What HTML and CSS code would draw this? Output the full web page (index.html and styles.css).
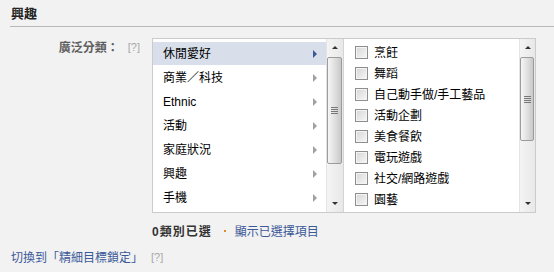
FILE: index.html
```html
<!DOCTYPE html>
<html lang="zh-Hant">
<head>
    <meta charset="UTF-8">
    <title>興趣</title>
    <link rel="stylesheet" href="styles.css">
</head>
<body>
    <h2 class="section-title">興趣</h2>

    <div class="field">
        <div class="field-label">廣泛分類：<span class="help">[?]</span></div>

        <div class="picker">
            <div class="pane pane-left">
                <ul class="cat-list">
                    <li class="cat selected">休閒愛好<i class="arrow"></i></li>
                    <li class="cat">商業／科技<i class="arrow"></i></li>
                    <li class="cat">Ethnic<i class="arrow"></i></li>
                    <li class="cat">活動<i class="arrow"></i></li>
                    <li class="cat">家庭狀況<i class="arrow"></i></li>
                    <li class="cat">興趣<i class="arrow"></i></li>
                    <li class="cat">手機<i class="arrow"></i></li>
                </ul>
                <div class="scrollbar">
                    <div class="sb-btn"><i class="sb-up"></i></div>
                    <div class="sb-thumb thumb-left"><i class="grip"></i></div>
                    <div class="sb-space"></div>
                    <div class="sb-btn"><i class="sb-down"></i></div>
                </div>
            </div>

            <div class="pane pane-right">
                <ul class="opt-list">
                    <li class="opt"><span class="box"></span>烹飪</li>
                    <li class="opt"><span class="box"></span>舞蹈</li>
                    <li class="opt"><span class="box"></span>自己動手做/手工藝品</li>
                    <li class="opt"><span class="box"></span>活動企劃</li>
                    <li class="opt"><span class="box"></span>美食餐飲</li>
                    <li class="opt"><span class="box"></span>電玩遊戲</li>
                    <li class="opt"><span class="box"></span>社交/網路遊戲</li>
                    <li class="opt"><span class="box"></span>園藝</li>
                </ul>
                <div class="scrollbar scrollbar-right">
                    <div class="sb-btn"><i class="sb-up"></i></div>
                    <div class="sb-thumb thumb-right"><i class="grip"></i></div>
                    <div class="sb-space"></div>
                    <div class="sb-btn"><i class="sb-down"></i></div>
                </div>
            </div>
        </div>
    </div>

    <div class="summary">
        <span class="count">0類別已選</span><span class="dot"></span><a href="#" class="link">顯示已選擇項目</a>
    </div>

    <div class="switch">
        <a href="#" class="link">切換到「精細目標鎖定」</a><span class="help">[?]</span>
    </div>
</body>
</html>
```

FILE: styles.css
```css
body {
    margin: 0;
    background: #f2f2f2;
    color: #000;
    font-family: "Liberation Sans", "Noto Sans CJK TC", sans-serif;
    font-size: 12px;
    line-height: 14px;
}

ul {
    list-style: none;
    margin: 0;
    padding: 0;
}

.section-title {
    margin: 0 0 0 10px;
    padding: 7px 0 5px 1px;
    font-size: 13px;
    line-height: 14px;
    font-weight: bold;
    color: #222;
    border-bottom: 1px solid #b8b8b8;
}

.field {
    display: flex;
    margin-top: 11px;
}

.field-label {
    width: 140px;
    margin-right: 12px;
    padding-top: 2px;
    text-align: right;
    font-weight: bold;
    color: #5e5e5e;
}

.help {
    margin-left: 9px;
    font-size: 11px;
    font-weight: normal;
    color: #a8a8a8;
    vertical-align: 1px;
}

.picker {
    display: flex;
    width: 382px;
    height: 173px;
    background: #fff;
    border: 1px solid #cbcbcb;
}

.pane {
    display: flex;
}

.pane-left {
    width: 190px;
    border-right: 1px solid #d4d4d4;
}

.pane-right {
    width: 191px;
}

.cat-list {
    flex: 1;
    padding-top: 3px;
}

.cat {
    display: flex;
    align-items: center;
    justify-content: space-between;
    height: 23px;
    margin-bottom: 1px;
    padding: 0 9px 0 10px;
    font-size: 12px;
}

.cat.selected {
    background: #d8dfea;
}

.arrow {
    width: 0;
    height: 0;
    border-left: 4px solid #a0a0a0;
    border-top: 4px solid transparent;
    border-bottom: 4px solid transparent;
}

.cat.selected .arrow {
    border-left-color: #3b5998;
}

.opt-list {
    flex: 1;
    padding: 3px 0 0 11px;
}

.opt {
    display: flex;
    align-items: center;
    height: 21px;
}

.box {
    width: 11px;
    height: 11px;
    margin-right: 6px;
    border: 1px solid #8e8e8e;
    background: linear-gradient(135deg, #d6d6d6, #f7f7f7);
    box-shadow: inset 0 0 0 1px #f4f4f4;
}

/* fake scrollbar */
.scrollbar {
    display: flex;
    flex-direction: column;
    width: 17px;
    background: linear-gradient(to right, #f4f4f4, #e8e8e8);
    border-left: 1px solid #e4e4e4;
    box-sizing: border-box;
}

.scrollbar-right {
    width: 16px;
}

.sb-btn {
    display: flex;
    align-items: center;
    justify-content: center;
    height: 17px;
}

.sb-up,
.sb-down {
    width: 0;
    height: 0;
    border-left: 3px solid transparent;
    border-right: 3px solid transparent;
}

.sb-up {
    border-bottom: 3px solid #333;
}

.sb-down {
    border-top: 3px solid #333;
}

.sb-thumb {
    display: flex;
    align-items: center;
    justify-content: center;
    margin: 1px 1px 0 0;
    border: 1px solid #9b9b9b;
    border-radius: 2px;
    background: linear-gradient(to right, #f6f6f6, #dcdcdc 60%, #c8c8c8);
    box-sizing: border-box;
}

.thumb-left {
    height: 107px;
}

.thumb-right {
    height: 84px;
}

.grip {
    width: 7px;
    height: 7px;
    background: repeating-linear-gradient(to bottom, #777 0 1px, transparent 1px 2px);
}

.sb-space {
    flex: 1;
}

.summary {
    margin: 12px 0 0 152px;
    display: flex;
    align-items: center;
}

.count {
    font-weight: bold;
    color: #333;
    letter-spacing: 1px;
}

.dot {
    width: 2px;
    height: 2px;
    margin: 0 9px 3px 12px;
    background: #e58a2a;
}

.link {
    color: #3b5998;
    text-decoration: none;
}

.switch {
    margin: 11px 0 0 11px;
}

.switch .help {
    margin-left: 8px;
}
```
